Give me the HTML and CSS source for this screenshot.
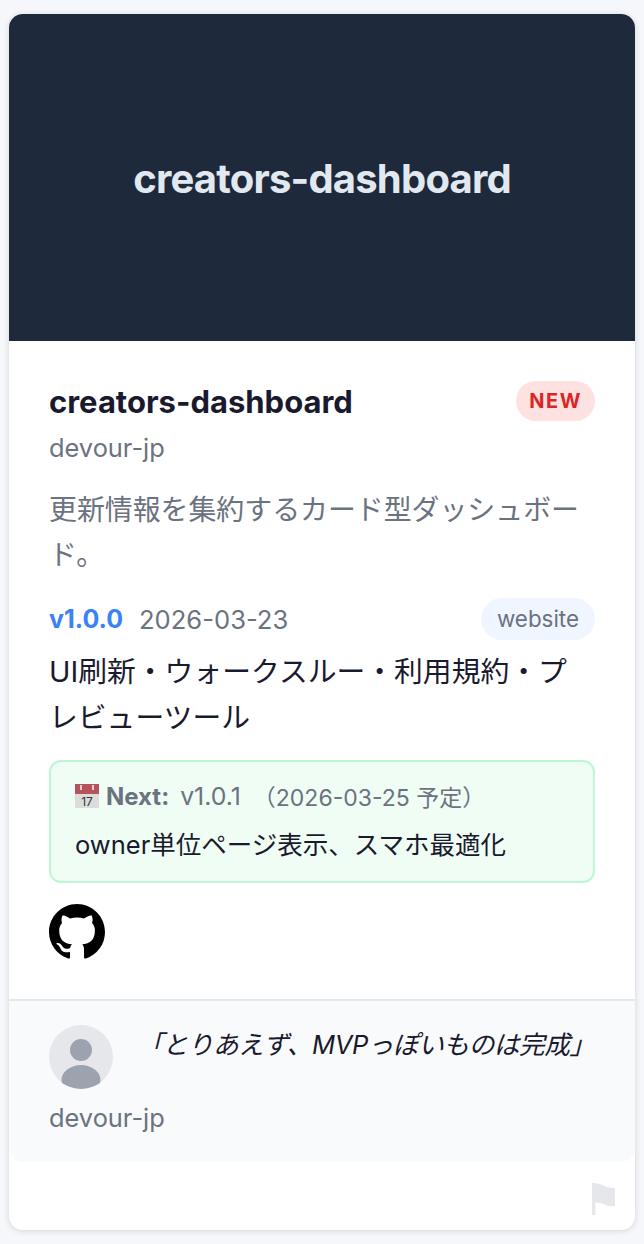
FILE: index.html
```html
<!DOCTYPE html>
<html lang="ja">
<head>
	<meta charset="UTF-8">
	<title>creators-dashboard</title>
	<link rel="stylesheet" href="styles.css">
</head>
<body>
	<article class="card">
		<header class="thumb">creators-dashboard</header>
		<section class="body">
			<div class="title-row">
				<h2 class="title">creators-dashboard</h2>
				<span class="badge-new">NEW</span>
			</div>
			<p class="owner">devour-jp</p>
			<p class="desc">更新情報を集約するカード型ダッシュボード。</p>
			<div class="meta">
				<span class="version">v1.0.0</span>
				<span class="date">2026-03-23</span>
				<span class="tag">website</span>
			</div>
			<p class="summary">UI刷新・ウォークスルー・利用規約・プレビューツール</p>
			<div class="next">
				<div class="next-head">
					<svg class="cal" viewBox="0 0 24 24">
						<rect width="24" height="24" fill="#dcdcdc"/>
						<rect width="24" height="10" fill="#b5545a"/>
						<path d="M6 1v5M18 1v5" stroke="#eee" stroke-width="1.6"/>
						<text class="cal-num" x="12" y="21.500">17</text>
					</svg>
					<strong>Next:</strong>
					<span class="next-ver">v1.0.1</span>
					<span>（2026-03-25 予定）</span>
				</div>
				<p class="next-text">owner単位ページ表示、スマホ最適化</p>
			</div>
			<a class="gh" href="javascript:;">
				<svg viewBox="0 0 16 16" width="56" height="56"><path fill="#000" d="M8 0C3.58 0 0 3.58 0 8c0 3.54 2.29 6.53 5.47 7.59.4.07.55-.17.55-.38 0-.19-.01-.82-.01-1.49-2.01.37-2.53-.49-2.69-.94-.09-.23-.48-.94-.82-1.13-.28-.15-.68-.52-.01-.53.63-.01 1.08.58 1.23.82.72 1.21 1.87.87 2.33.66.07-.52.28-.87.51-1.07-1.78-.2-3.64-.89-3.64-3.95 0-.87.31-1.59.82-2.15-.08-.2-.36-1.02.08-2.12 0 0 .67-.21 2.2.82.64-.18 1.32-.27 2-.27s1.36.09 2 .27c1.53-1.04 2.2-.82 2.2-.82.44 1.1.16 1.92.08 2.12.51.56.82 1.27.82 2.15 0 3.07-1.87 3.75-3.65 3.95.29.25.54.73.54 1.48 0 1.07-.01 1.93-.01 2.2 0 .21.15.46.55.38A8.01 8.01 0 0 0 16 8c0-4.42-3.58-8-8-8z"/></svg>
			</a>
		</section>
		<section class="comment">
			<div class="comment-row">
				<svg class="avatar" viewBox="0 0 64 64">
					<clipPath id="avatar-clip"><circle cx="32" cy="32" r="32"/></clipPath>
					<circle cx="32" cy="32" r="32" fill="#e5e7eb"/>
					<circle cx="32" cy="25" r="11" fill="#9ca3af"/>
					<ellipse cx="32" cy="55" rx="19.500" ry="15" fill="#9ca3af" clip-path="url(#avatar-clip)"/>
				</svg>
				<p class="quote">「とりあえず、MVPっぽいものは完成」</p>
			</div>
			<div class="comment-name">devour-jp</div>
		</section>
		<footer class="foot">
			<svg class="flag" viewBox="0 0 23 32" width="23" height="32"><path fill="#e5e7eb" d="M0 0h3.500v32H0zM3.500 0.500c3 0 6.500 1 10 3 3 1.500 6.500 1.500 9.500 1.500v18c-3 .5-6.500.5-9.500-1-3.500-1.800-7-3-10-2.500z"/></svg>
		</footer>
	</article>
</body>
</html>
```

FILE: styles.css
```css
html,body{
	margin: 0;
	background: #f6f7fb;
}
body{
	padding: 14px 9px;
	font-family: Inter, "Noto Sans CJK JP", sans-serif;
	color: #1a1a2e;
}
p,h2{
	margin: 0;
}
.card{
	height: 1216px;
	display: flex;
	flex-direction: column;
	background: #fff;
	border-radius: 14px;
	overflow: hidden;
	box-shadow: 0 1px 6px rgba(0,0,0,.14);
}
.thumb{
	height: 327px;
	box-sizing: border-box;
	padding-top: 2px;
	display: flex;
	align-items: center;
	justify-content: center;
	background: #1e293b;
	color: #e2e8f0;
	font-size: 40px;
	font-weight: 700;
	letter-spacing: -.8px;
}
.body{
	padding: 40px 40px 0;
	height: 658px;
	box-sizing: border-box;
}
.title-row{
	display: flex;
	align-items: center;
	justify-content: space-between;
	height: 40px;
}
.title{
	font-size: 31px;
	font-weight: 700;
}
.badge-new{
	padding: 0 13px;
	height: 40px;
	line-height: 40px;
	border-radius: 20px;
	background: #fee2e2;
	color: #dc2626;
	font-size: 20px;
	font-weight: 700;
	letter-spacing: 1.5px;
}
.owner{
	margin-top: 9px;
	font-size: 25.400px;
	line-height: 36px;
	color: #6b7280;
}
.desc{
	margin-top: 22px;
	font-size: 27.900px;
	line-height: 45px;
	color: #6b7280;
}
.meta{
	margin-top: 20px;
	display: flex;
	align-items: center;
	height: 42px;
	font-size: 25.600px;
	color: #6b7280;
}
.version{
	color: #3b82f6;
	font-size: 25px;
	font-weight: 700;
	margin-right: 16px;
}
.tag{
	margin-left: auto;
	padding: 0 16px;
	height: 42px;
	line-height: 42px;
	border-radius: 21px;
	background: #eff6ff;
	font-size: 22.400px;
}
.summary{
	margin-top: 9px;
	font-size: 28.800px;
	line-height: 46px;
}
.next{
	margin-top: 19px;
	height: 123px;
	box-sizing: border-box;
	padding: 17px 24px 0;
	background: #f0fdf4;
	border: 2px solid #bbf7d0;
	border-radius: 12px;
}
.next-head{
	display: flex;
	align-items: center;
	height: 34px;
	font-size: 23px;
	color: #6b7280;
}
.next-head strong{
	margin: 0 11px 0 7px;
	font-size: 24px;
}
.next-ver{
	margin-right: 12px;
	font-size: 24.800px;
}
.cal{
	width: 24px;
	height: 24px;
}
.cal-num{
	font-size: 12px;
	text-anchor: middle;
	fill: #333;
}
.next-text{
	margin-top: 14px;
	font-size: 25.500px;
	line-height: 36px;
}
.gh{
	display: block;
	margin-top: 21px;
	width: 56px;
	height: 56px;
}
.gh svg{
	display: block;
}
.comment{
	height: 163px;
	box-sizing: border-box;
	padding: 24px 40px 0;
	background: #f9fafb;
	border-top: 2px solid #e5e7eb;
	border-radius: 0 0 14px 14px;
}
.comment-row{
	display: flex;
	gap: 24px;
}
.avatar{
	width: 64px;
	height: 64px;
	flex: none;
}
.quote{
	flex: 1;
	font-size: 25.600px;
	line-height: 36px;
	font-style: italic;
	text-align: center;
	letter-spacing: -.4px;
	margin-top: 2px;
}
.comment-name{
	margin-top: 11px;
	font-size: 25.400px;
	line-height: 36px;
	color: #6b7280;
}
.foot{
	flex: 1;
	display: flex;
	justify-content: flex-end;
	padding: 21px 20px 0 0;
}
```
